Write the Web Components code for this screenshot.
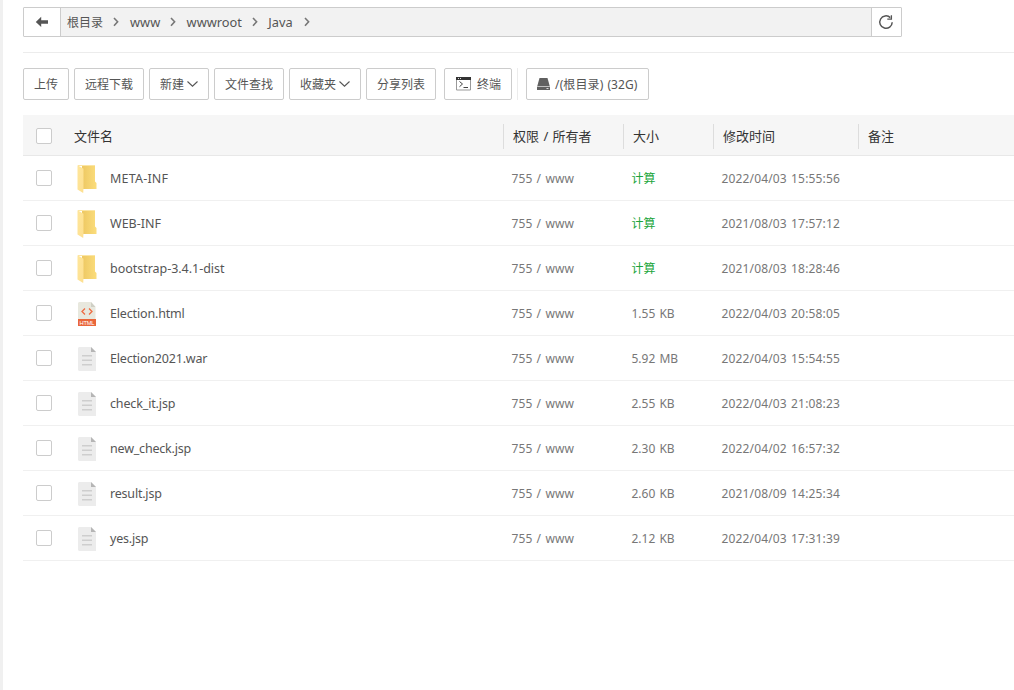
<!DOCTYPE html>
<html lang="zh-CN">
<head>
<meta charset="utf-8">
<title>文件</title>
<style>
  html, body { height: 100%; }
  body {
    margin: 0;
    overflow: hidden;
    background: #fff;
    color: #555;
    font: 12px/18px "Noto Sans", "Noto Sans CJK SC", sans-serif;
  }
</style>
</head>
<body>
<file-manager></file-manager>

<script>
const ICONS = {
  back: `<svg width="14" height="12" viewBox="0 0 14 12"><path d="M6.2.8v3.4H13v3.5H6.2v3.4L.8 6z" fill="#555"/></svg>`,
  refresh: `<svg width="16" height="16" viewBox="0 0 16 16" fill="none" stroke="#555" stroke-width="1.5"><path d="M14.2 8.2A6.2 6.2 0 1 1 12.3 3.6"/><path d="M13.4 1.2v4H9.3" stroke-width="1.3"/></svg>`,
  chevron: `<svg width="6" height="10" viewBox="0 0 6 10"><path d="M1 1l3.6 3.8L1 8.7" fill="none" stroke="#777" stroke-width="1.6"/></svg>`,
  down: `<svg width="11" height="7" viewBox="0 0 11 7"><path d="M.5 .5l5 4.7L10.500 .5" fill="none" stroke="#555" stroke-width="1.1"/></svg>`,
  terminal: `<svg width="16" height="14" viewBox="0 0 16 14"><path d="M.5.5h14v12.500H.5z" fill="#fff" stroke="#999"/><path d="M0 0h15v3H0z" fill="#333"/><path d="M2 1h1v1H2zM4 1h1v1H4z" fill="#ddd"/><path d="M3.500 4.500l3 2.500-3 2.700M7.500 10.500h4.500" fill="none" stroke="#444"/></svg>`,
  disk: `<svg width="13" height="12" viewBox="0 0 13 12"><path d="M2.500 0h8L12.700 8H.3z" fill="#606060"/><path d="M0 8.600h13V12H0z" fill="#606060"/><path d="M9.500 10h2v1h-2z" fill="#ddd"/></svg>`,
  folder: `<svg width="20" height="28" viewBox="0 0 20 28"><defs><linearGradient id="a"><stop offset=".3" stop-color="#efca65"/><stop offset="1" stop-color="#fbdd7c"/></linearGradient><linearGradient id="b" x2="1" y2="1"><stop stop-color="#ffe69a"/><stop offset="1" stop-color="#fddf90"/></linearGradient></defs><path d="M1 0h17v16.500l1.500 1.500v6H5V1z" fill="url(#a)"/><path d="M1 0h17v1H1z" fill="#fbe5a4"/><path d="M.5.300l6 3.500v19.500l-.3 4.700L.5 24.500z" fill="url(#b)"/></svg>`,
  html: `<svg width="18" height="24" viewBox="0 0 18 24"><path d="M1 0h12l4.500 5v19H0V1z" fill="#e8e8de"/><path d="M13 0l4.500 5H13z" fill="#cfcfc5"/><path d="M0 17h18v7H0z" fill="#e9663a"/><path d="M7 6.500L4 9.500l3 3M11 6.500l3 3-3 3" fill="none" stroke="#ee6c43" stroke-width="1.300"/><text x="9" y="22.700" text-anchor="middle" font-family="Liberation Sans" font-size="5.800" fill="#fff" textLength="15">HTML</text></svg>`,
  file: `<svg width="18" height="24" viewBox="0 0 18 24"><path d="M1 0h12l5 5v19H1l-1-1V1z" fill="#ececec"/><path d="M13 0l5 5h-5z" fill="#b5b5b5"/><path d="M4 8h10v1.500H4zM4 12.500h10V14H4zM4 17h10v1.500H4z" fill="#cecece"/></svg>`
};

class UiIcon extends HTMLElement {
  constructor() {
    super();
    this.attachShadow({ mode: 'open' });
  }
  connectedCallback() {
    this.shadowRoot.innerHTML = `
      <style>
        :host { display: inline-flex; flex: none; }
        svg { display: block; }
      </style>
      ${ICONS[this.getAttribute('name')]}
    `;
  }
}
customElements.define('ui-icon', UiIcon);

class CheckBox extends HTMLElement {
  constructor() {
    super();
    this.attachShadow({ mode: 'open' });
    this.shadowRoot.innerHTML = `
      <style>
        :host {
          display: block;
          box-sizing: border-box;
          width: 16px;
          height: 16px;
          border: 1px solid #ccc;
          border-radius: 2px;
          background: #fff;
        }
      </style>
    `;
  }
}
customElements.define('check-box', CheckBox);

class PathBar extends HTMLElement {
  constructor() {
    super();
    this.attachShadow({ mode: 'open' });
  }
  connectedCallback() {
    const parts = this.getAttribute('path').split('/');
    this.shadowRoot.innerHTML = `
      <style>
        :host {
          display: flex;
          box-sizing: border-box;
          width: 879px;
          height: 30px;
          border: 1px solid #ccc;
          border-radius: 1px;
        }
        .btn { display: flex; align-items: center; justify-content: center; }
        .back { width: 36px; border-right: 1px solid #ccc; }
        .refresh { width: 28px; padding-right: 1px; border-left: 1px solid #ccc; }
        .path {
          flex: 1;
          display: flex;
          align-items: center;
          padding-left: 6px;
          background: #f2f2f2;
          font-size: 12.8px;
        }
        .path span { white-space: nowrap; }
        .path span:first-child { font-size: 12px; padding-top: 1px; }
        .path ui-icon { margin: 0 11px 0 10px; }
        .path ui-icon:nth-of-type(n+2) { margin-right: 10.6px; margin-left: 9.8px; }
        .path ui-icon:last-child { margin-left: 11px; }
      </style>
      <div class="btn back"><ui-icon name="back"></ui-icon></div>
      <div class="path">${parts.map(p => `<span>${p}</span><ui-icon name="chevron"></ui-icon>`).join('')}</div>
      <div class="btn refresh"><ui-icon name="refresh"></ui-icon></div>
    `;
  }
}
customElements.define('path-bar', PathBar);

class ToolButton extends HTMLElement {
  constructor() {
    super();
    this.attachShadow({ mode: 'open' });
  }
  connectedCallback() {
    const icon = this.getAttribute('icon');
    this.shadowRoot.innerHTML = `
      <style>
        :host {
          display: flex;
          align-items: center;
          box-sizing: border-box;
          height: 32px;
          padding: 0 10px;
          border: 1px solid #ccc;
          border-radius: 2px;
          white-space: nowrap;
        }
        :host([icon="disk"]) { width: 123px; letter-spacing: .1px; word-spacing: .8px; }
        .label { padding-top: 1px; }
        ui-icon[name="down"] { margin-left: 3px; }
        ui-icon[name="terminal"] { margin: 0 5px 0 1px; }
        ui-icon[name="disk"] { margin-right: 5px; }
      </style>
      ${icon ? `<ui-icon name="${icon}"></ui-icon>` : ''}
      <span class="label"><slot></slot></span>
      ${this.hasAttribute('menu') ? '<ui-icon name="down"></ui-icon>' : ''}
    `;
  }
}
customElements.define('tool-button', ToolButton);

class FileRow extends HTMLElement {
  constructor() {
    super();
    this.attachShadow({ mode: 'open' });
  }
  set file(f) {
    this.shadowRoot.innerHTML = `
      <style>
        :host {
          display: grid;
          grid-template-columns: 13px 41px 33px 401.5px 120px 90px 1fr;
          align-items: center;
          box-sizing: border-box;
          height: 45px;
          border-bottom: 1px solid #f0f0f0;
          color: #777;
          white-space: nowrap;
          word-spacing: 1px;
        }
        check-box { grid-column: 2; }
        span, ui-icon { padding-top: 2px; }
        ui-icon[name="html"], ui-icon[name="file"] { padding-left: 1px; }
        .name { color: #555; font-size: 12.5px; letter-spacing: ${f.tracking || 0}px; }
        .mode { letter-spacing: .1px; }
        .calc { color: #20a53a; }
        .time { letter-spacing: .15px; }
      </style>
      <check-box></check-box>
      <ui-icon name="${f.icon}"></ui-icon>
      <span class="name">${f.name}</span>
      <span class="mode">755 / www</span>
      ${f.size ? `<span>${f.size}</span>` : '<span class="calc">计算</span>'}
      <span class="time">${f.time}</span>
    `;
  }
}
customElements.define('file-row', FileRow);

class FileTable extends HTMLElement {
  constructor() {
    super();
    this.attachShadow({ mode: 'open' });
    this.shadowRoot.innerHTML = `
      <style>
        :host { display: block; }
        .head {
          display: grid;
          grid-template-columns: 13px 38px 429px 120px 90px 145px 1fr;
          align-items: center;
          box-sizing: border-box;
          height: 41px;
          background: #f6f6f6;
          border-bottom: 1px solid #e8e8e8;
          color: #333;
          font-size: 13px;
          word-spacing: 1px;
        }
        check-box { grid-column: 2; margin-top: 2px; }
        .col {
          display: flex;
          align-items: center;
          box-sizing: border-box;
          height: 25px;
          margin-top: 3px;
          padding: 0 0 1px 9px;
          border-left: 1px solid #ddd;
        }
        .first { border: 0; padding-left: 0; }
      </style>
      <div class="head">
        <check-box></check-box>
        <span class="col first">文件名</span>
        <span class="col">权限 / 所有者</span>
        <span class="col">大小</span>
        <span class="col">修改时间</span>
        <span class="col">备注</span>
      </div>
    `;
  }
  set files(list) {
    for (const f of list) {
      const row = document.createElement('file-row');
      row.file = f;
      this.shadowRoot.appendChild(row);
    }
  }
}
customElements.define('file-table', FileTable);

class FileManager extends HTMLElement {
  constructor() {
    super();
    this.attachShadow({ mode: 'open' });
    this.shadowRoot.innerHTML = `
      <style>
        :host {
          display: block;
          box-sizing: border-box;
          height: 100%;
          padding: 7px 0 0 20px;
          border-left: 3px solid #f0f0f0;
        }
        hr { margin: 15px 0; border: 0; border-top: 1px solid #ececec; }
        .tools { display: flex; gap: 5px; margin-bottom: 15px; }
        .term { margin-left: 3px; }
        .sep { width: 1px; background: #ececec; margin-right: 3px; }
      </style>
      <path-bar path="根目录/www/wwwroot/Java"></path-bar>
      <hr>
      <div class="tools">
        <tool-button>上传</tool-button>
        <tool-button>远程下载</tool-button>
        <tool-button menu>新建</tool-button>
        <tool-button>文件查找</tool-button>
        <tool-button menu>收藏夹</tool-button>
        <tool-button>分享列表</tool-button>
        <tool-button class="term" icon="terminal">终端</tool-button>
        <i class="sep"></i>
        <tool-button icon="disk">/(根目录) (32G)</tool-button>
      </div>
      <file-table></file-table>
    `;
    this.shadowRoot.querySelector('file-table').files = [
      { icon: 'folder', name: 'META-INF', tracking: .2, time: '2022/04/03 15:55:56' },
      { icon: 'folder', name: 'WEB-INF', time: '2021/08/03 17:57:12' },
      { icon: 'folder', name: 'bootstrap-3.4.1-dist', tracking: -.03, time: '2021/08/03 18:28:46' },
      { icon: 'html', name: 'Election.html', tracking: -.16, size: '1.55 KB', time: '2022/04/03 20:58:05' },
      { icon: 'file', name: 'Election2021.war', tracking: -.18, size: '5.92 MB', time: '2022/04/03 15:54:55' },
      { icon: 'file', name: 'check_it.jsp', tracking: -.14, size: '2.55 KB', time: '2022/04/03 21:08:23' },
      { icon: 'file', name: 'new_check.jsp', tracking: -.2, size: '2.30 KB', time: '2022/04/02 16:57:32' },
      { icon: 'file', name: 'result.jsp', tracking: -.2, size: '2.60 KB', time: '2021/08/09 14:25:34' },
      { icon: 'file', name: 'yes.jsp', tracking: -.2, size: '2.12 KB', time: '2022/04/03 17:31:39' }
    ];
  }
}
customElements.define('file-manager', FileManager);
</script>
</body>
</html>
